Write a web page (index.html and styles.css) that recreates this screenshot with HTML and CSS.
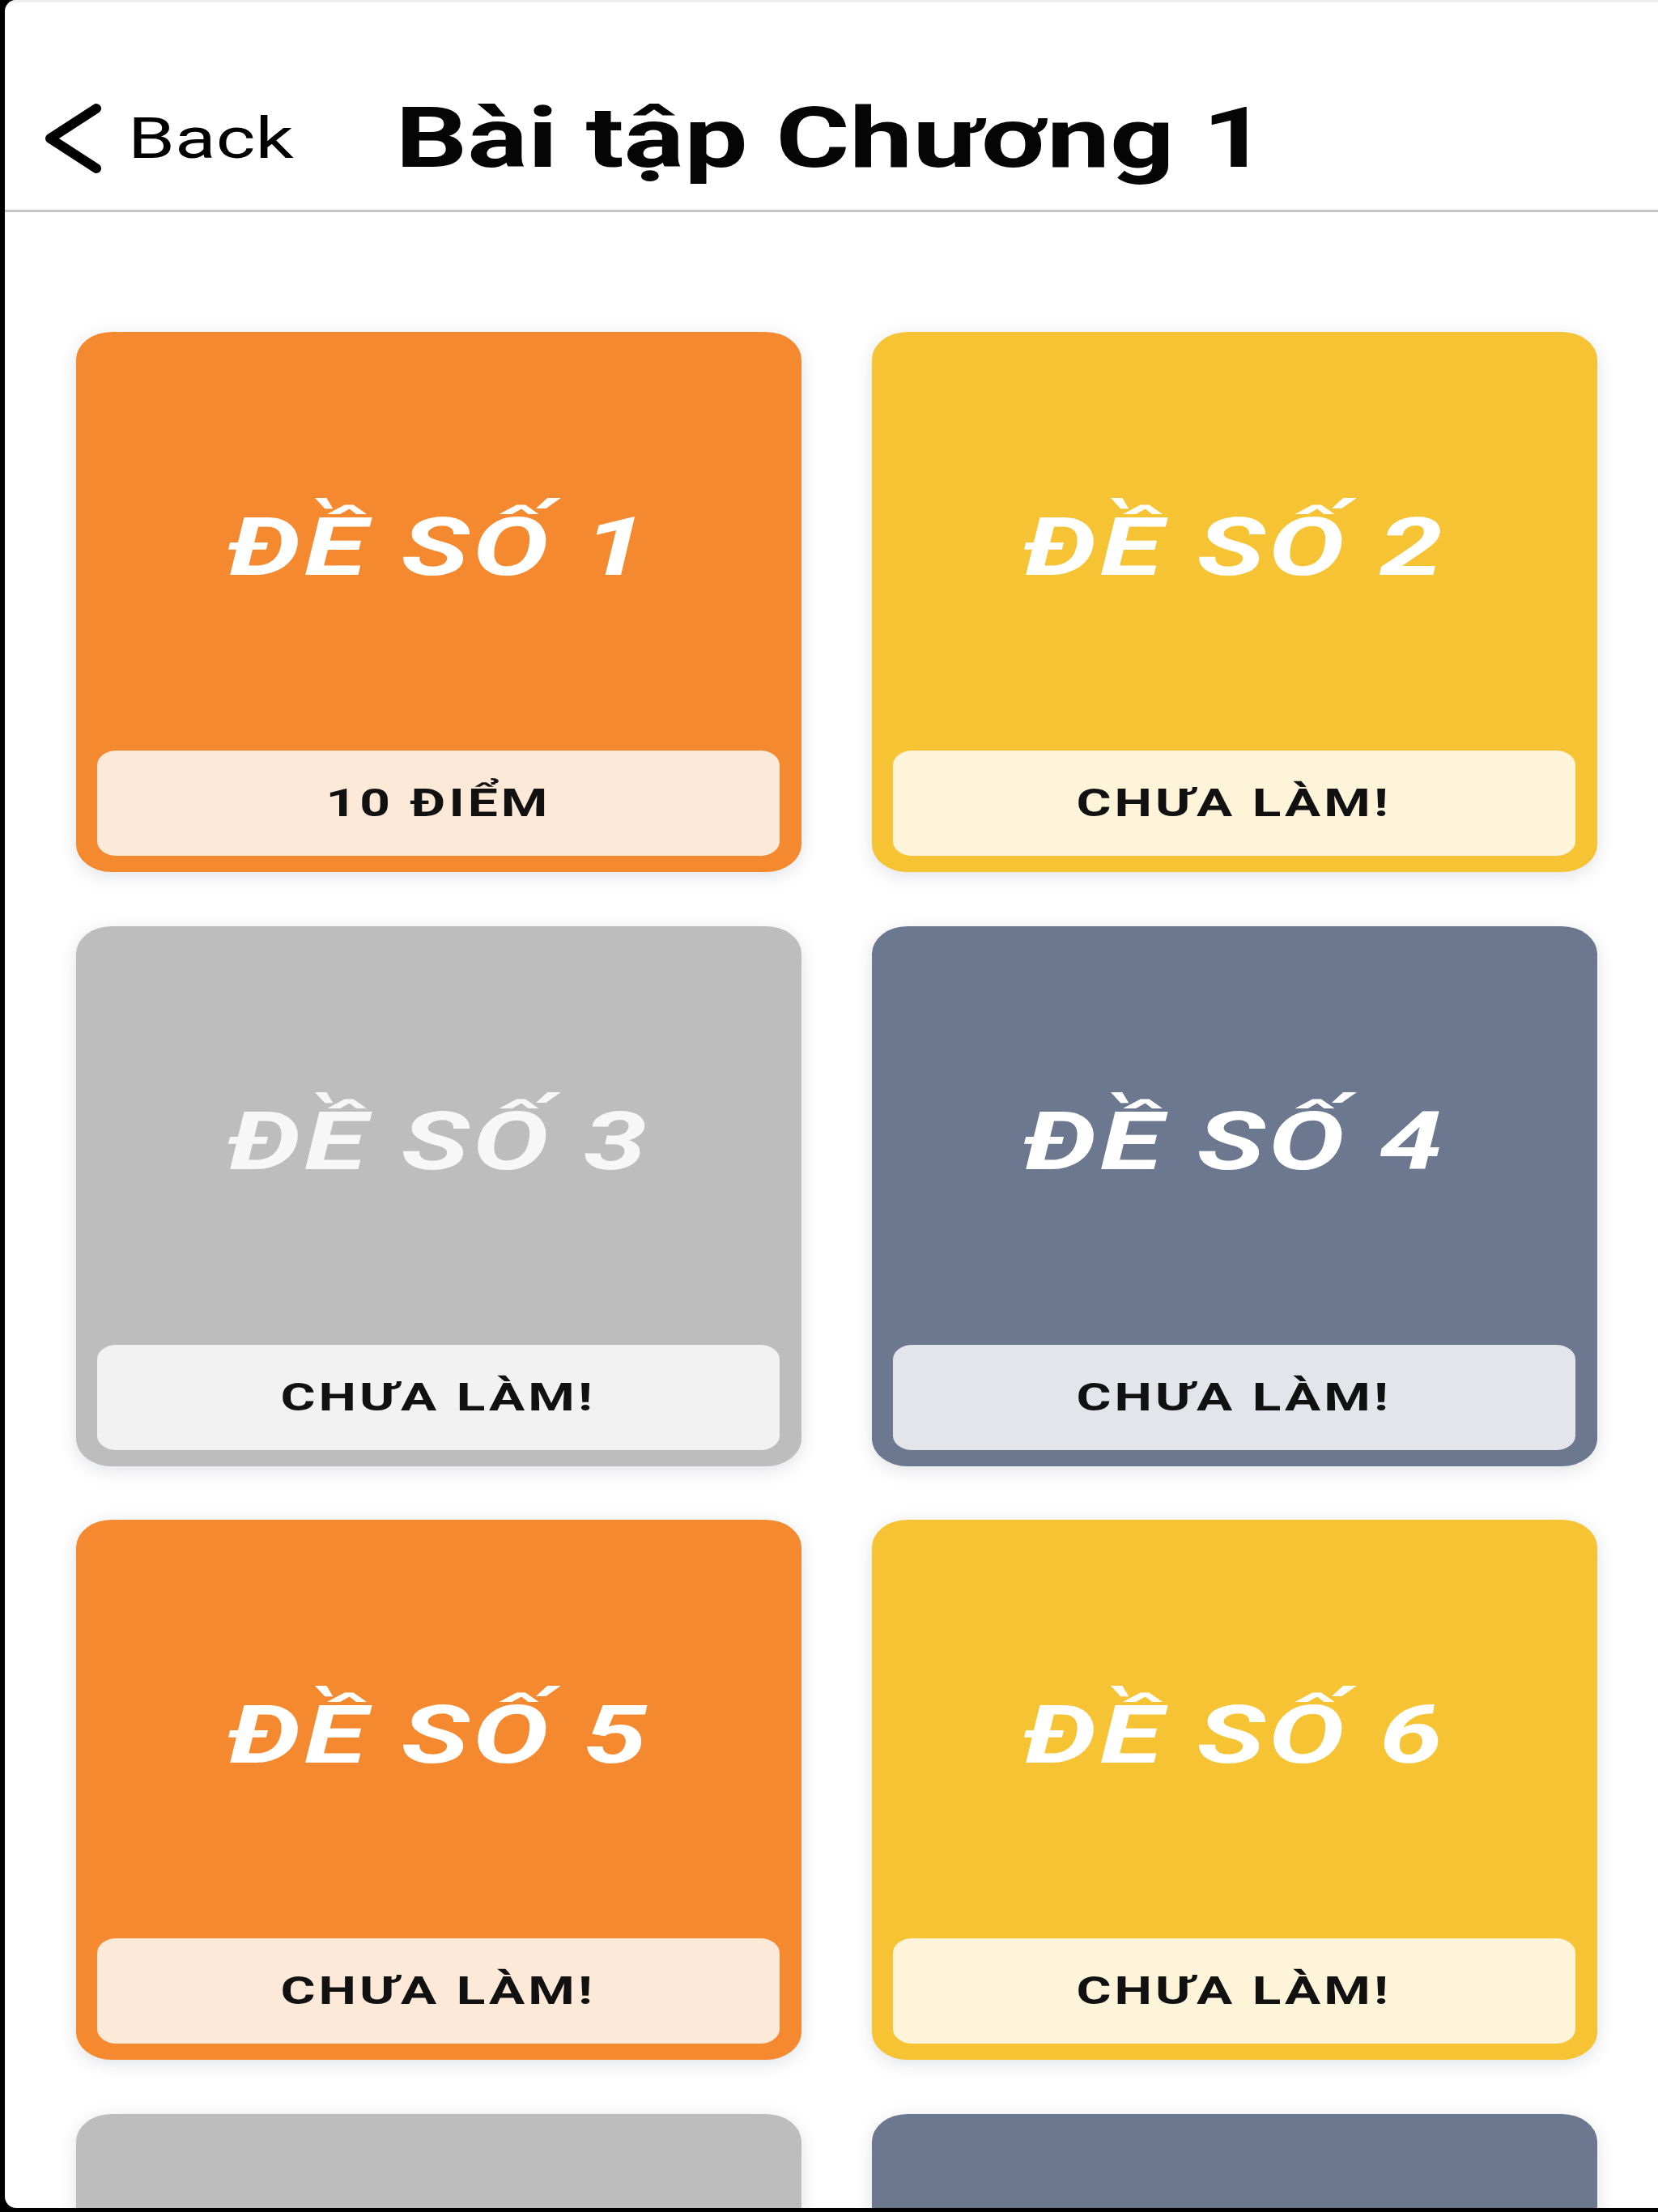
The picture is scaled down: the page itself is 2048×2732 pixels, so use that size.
FILE: index.html
```html
<!DOCTYPE html>
<html lang="vi">
<head>
<meta charset="utf-8">
<title>Bài tập Chương 1</title>
<link rel="stylesheet" href="styles.css">
</head>
<body>
<div class="screen">
  <header class="header">
    <div class="back">
      <svg class="back-icon" viewBox="0 0 72 86" width="72" height="86" aria-hidden="true">
        <polyline points="65,6 8,43 65,80" fill="none" stroke="#000" stroke-width="12" stroke-linecap="round" stroke-linejoin="round"/>
      </svg>
      <span class="back-text">Back</span>
    </div>
    <h1 class="title"><span class="wide-title">Bài tập Chương 1</span></h1>
    <div class="spacer"></div>
  </header>

  <main class="grid">
    <div class="card orange">
      <div class="card-title"><span class="wide-card">ĐỀ SỐ 1</span></div>
      <div class="card-bar"><span class="wide-bar">10 ĐIỂM</span></div>
    </div>
    <div class="card yellow">
      <div class="card-title"><span class="wide-card">ĐỀ SỐ 2</span></div>
      <div class="card-bar"><span class="wide-bar">CHƯA LÀM!</span></div>
    </div>
    <div class="card gray">
      <div class="card-title"><span class="wide-card">ĐỀ SỐ 3</span></div>
      <div class="card-bar"><span class="wide-bar">CHƯA LÀM!</span></div>
    </div>
    <div class="card slate">
      <div class="card-title"><span class="wide-card">ĐỀ SỐ 4</span></div>
      <div class="card-bar"><span class="wide-bar">CHƯA LÀM!</span></div>
    </div>
    <div class="card orange">
      <div class="card-title"><span class="wide-card">ĐỀ SỐ 5</span></div>
      <div class="card-bar"><span class="wide-bar">CHƯA LÀM!</span></div>
    </div>
    <div class="card yellow">
      <div class="card-title"><span class="wide-card">ĐỀ SỐ 6</span></div>
      <div class="card-bar"><span class="wide-bar">CHƯA LÀM!</span></div>
    </div>
    <div class="card gray"></div>
    <div class="card slate"></div>
  </main>
</div>
</body>
</html>
```

FILE: styles.css
```css
html, body {
  margin: 0;
  padding: 0;
}

body {
  background: #000;
  width: 2048px;
  height: 2732px;
  overflow: hidden;
  font-family: Roboto, "Liberation Sans", Arial, sans-serif;
}

.screen {
  margin-left: 6px;
  height: 2727px;
  background: #fff;
  border-radius: 14px 0 0 14px;
  overflow: hidden;
  display: flex;
  flex-direction: column;
}

.wide-title,
.wide-card,
.wide-bar {
  display: inline-block;
  white-space: nowrap;
}

.wide-title { transform: scaleX(1.34); }
.wide-card { transform: scaleX(1.42); }
.wide-bar { transform: scaleX(1.37); }

/* Header */
.header {
  flex: none;
  height: 176px;
  padding-top: 80px;
  border-top: 3px solid #eeeeee;
  border-bottom: 3px solid #c6c6c6;
  display: grid;
  grid-template-columns: 1fr auto 1fr;
  align-items: center;
}

.back {
  display: flex;
  align-items: center;
  padding-left: 48px;
}

.back-icon {
  display: block;
  flex: none;
}

.back-text {
  display: inline-block;
  margin-left: 32px;
  font-size: 70px;
  line-height: 1;
  font-weight: 400;
  color: #000;
  transform: scaleX(1.33);
  transform-origin: left center;
}

.title {
  margin: 0;
  font-size: 104px;
  line-height: 1;
  font-weight: 700;
  color: #050505;
  text-align: center;
}

/* Grid of cards */
.grid {
  flex: none;
  display: grid;
  grid-template-columns: 896px 896px;
  grid-auto-rows: 667px;
  column-gap: 87px;
  row-gap: 66.5px;
  padding: 148px 0 0 88px;
}

.card {
  display: flex;
  flex-direction: column;
  border-radius: 44px / 34px;
  box-shadow: 0 5px 22px rgba(40, 50, 70, 0.14);
}

.card-title {
  flex: 1;
  display: flex;
  align-items: center;
  justify-content: center;
  padding-top: 16px;
  font-size: 99px;
  line-height: 1;
  font-weight: 700;
  font-style: italic;
  letter-spacing: 3px;
  color: #fff;
}

.card-bar {
  flex: none;
  height: 130px;
  margin: 0 27px 20px 26px;
  border-radius: 24px / 18px;
  display: flex;
  align-items: center;
  justify-content: center;
  font-size: 48px;
  line-height: 1;
  font-weight: 700;
  letter-spacing: 3px;
  color: #111;
}

.orange { background: #f5892f; }
.orange .card-bar { background: #fde9d8; }

.yellow { background: #f5c334; }
.yellow .card-bar { background: #fef4da; }

.gray { background: #bdbdbd; }
.gray .card-bar { background: #f2f2f2; }
.gray .card-title { color: #f7f7f7; }

.slate { background: #6b788f; }
.slate .card-bar { background: #e3e5ea; }
```
